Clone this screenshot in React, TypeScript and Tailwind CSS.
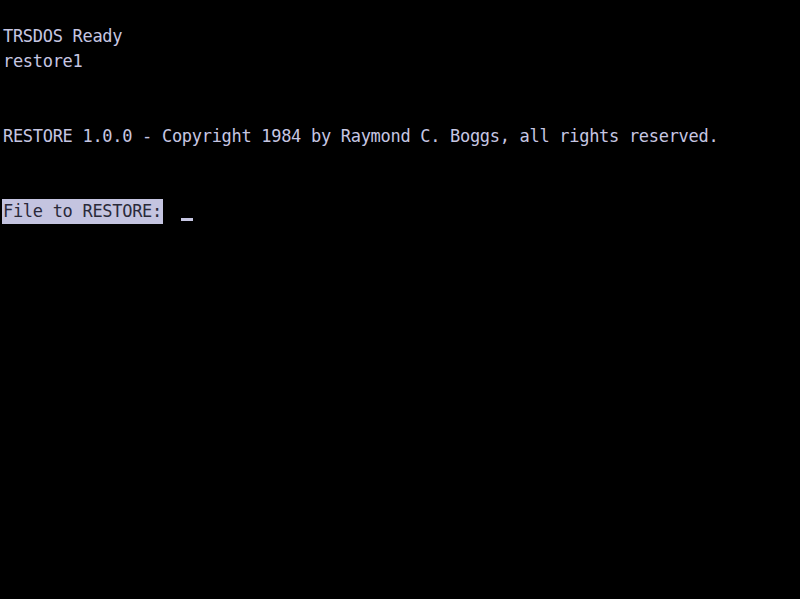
import React from "react";

const lines: string[] = [
  "TRSDOS Ready",
  "restore1",
  "",
  "",
  "RESTORE 1.0.0 - Copyright 1984 by Raymond C. Boggs, all rights reserved.",
  "",
  "",
];

const App: React.FC = () => {
  return (
    <div
      className="w-[800px] h-[599px] bg-black overflow-hidden pt-[24px] pl-[3px] text-[#c6c6e2] text-[17px] leading-[25px] tracking-[-0.3px] whitespace-pre"
      style={{ fontFamily: '"DejaVu Sans Mono", "Liberation Mono", monospace' }}
    >
      {lines.map((line, i) => (
        <div key={i} className="h-[25px]">
          {line}
        </div>
      ))}
      {/* prompt line with inverse video label and cursor */}
      <div className="flex items-start h-[25px]">
        <span className="h-[25px] -ml-[1px] px-[1px] bg-[#c4c4e0] text-[#2a2a3a]">
          File to RESTORE:
        </span>
        <span className="mt-[19px] ml-[18px] w-[12px] h-[3px] bg-[#c6c6e2]" />
      </div>
    </div>
  );
};

export default App;
